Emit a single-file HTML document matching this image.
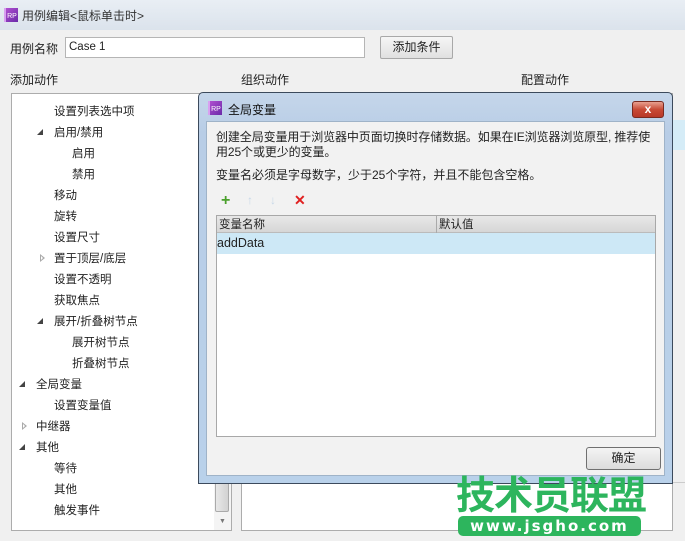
<!DOCTYPE html>
<html><head><meta charset="utf-8"><style>
*{margin:0;padding:0;box-sizing:border-box}
body{width:685px;height:541px;overflow:hidden;background:#f0f0f0;font-family:"Liberation Sans","Noto Sans CJK SC",sans-serif;font-size:12px;color:#222;position:relative}
.a{position:absolute}
.rp{position:absolute;width:14px;height:14px;background:linear-gradient(135deg,#b04fd0,#6a2aa8);color:#fff;font-size:7px;line-height:18px;text-align:center;border-left:2px solid #d8a0f0}
.tree div{position:absolute;font-size:11.5px;white-space:nowrap}
.tree div.tri{width:0;height:0;border-left:6px solid transparent;border-bottom:6px solid #444}
.tree div.trio{width:0;height:0;border-top:4px solid transparent;border-bottom:4px solid transparent;border-left:5px solid #aaa}
.tree div.trio:after{content:"";position:absolute;left:-4px;top:-2px;border-top:2px solid transparent;border-bottom:2px solid transparent;border-left:2px solid #fff}
</style></head><body>
<div class="a" style="left:0;top:0;width:685px;height:30px;background:linear-gradient(#e9eef4,#dbe3ec)"></div>
<div class="rp" style="left:4px;top:8px"><span>RP</span></div>
<div class="a" style="left:22px;top:7px;color:#333;font-size:12px">用例编辑&lt;鼠标单击时&gt;</div>
<div class="a" style="left:10px;top:40px">用例名称</div>
<div class="a" style="left:65px;top:37px;width:300px;height:21px;background:#fff;border:1px solid #b5b5b5;padding:3px 3px;font-size:11.5px">Case 1</div>
<div class="a" style="left:380px;top:36px;width:73px;height:23px;background:linear-gradient(#f6f6f6,#e0e0e0);border:1px solid #a8a8a8;border-radius:2px;text-align:center;line-height:21px">添加条件</div>
<div class="a" style="left:10px;top:71px">添加动作</div>
<div class="a" style="left:241px;top:71px">组织动作</div>
<div class="a" style="left:521px;top:71px">配置动作</div>
<div class="a" style="left:11px;top:93px;width:221px;height:438px;background:#fff;border:1px solid #acacac"></div>
<div class="a" style="left:214px;top:94px;width:17px;height:436px;background:#f4f4f4"></div>
<div class="a" style="left:215px;top:480px;width:14px;height:32px;background:linear-gradient(90deg,#e8e8e8,#d2d2d2);border:1px solid #aaa;border-radius:2px"></div>
<div class="a" style="left:219px;top:518px;font-size:7px;color:#777">▼</div>
<div class="a" style="left:241px;top:93px;width:432px;height:438px;background:#fff;border:1px solid #acacac"></div>
<div class="a" style="left:673px;top:120px;width:12px;height:30px;background:#d5ecf7"></div>
<div class="a" style="left:673px;top:482px;width:12px;height:1px;background:#ccc"></div>
<div class="tree">
<div style="left:54px;top:103px">设置列表选中项</div>
<div class="tri" style="left:37px;top:129px"></div><div style="left:54px;top:124px">启用/禁用</div>
<div style="left:72px;top:145px">启用</div>
<div style="left:72px;top:166px">禁用</div>
<div style="left:54px;top:187px">移动</div>
<div style="left:54px;top:208px">旋转</div>
<div style="left:54px;top:229px">设置尺寸</div>
<div class="trio" style="left:40px;top:254px"></div><div style="left:54px;top:250px">置于顶层/底层</div>
<div style="left:54px;top:271px">设置不透明</div>
<div style="left:54px;top:292px">获取焦点</div>
<div class="tri" style="left:37px;top:318px"></div><div style="left:54px;top:313px">展开/折叠树节点</div>
<div style="left:72px;top:334px">展开树节点</div>
<div style="left:72px;top:355px">折叠树节点</div>
<div class="tri" style="left:19px;top:381px"></div><div style="left:36px;top:376px">全局变量</div>
<div style="left:54px;top:397px">设置变量值</div>
<div class="trio" style="left:22px;top:422px"></div><div style="left:36px;top:418px">中继器</div>
<div class="tri" style="left:19px;top:444px"></div><div style="left:36px;top:439px">其他</div>
<div style="left:54px;top:460px">等待</div>
<div style="left:54px;top:481px">其他</div>
<div style="left:54px;top:502px">触发事件</div>
</div>
<!-- dialog -->
<div class="a" style="left:198px;top:92px;width:475px;height:392px;background:linear-gradient(#c5d6ea,#b8cde6 40px,#b9d1ea);border:1px solid #3c4a5c;border-radius:5px 5px 0 0"></div>
<div class="rp" style="left:208px;top:101px"><span>RP</span></div>
<div class="a" style="left:228px;top:101px;font-size:12px;color:#111">全局变量</div>
<div class="a" style="left:632px;top:101px;width:32px;height:17px;background:linear-gradient(#e8a090,#c84a36 50%,#b83828);border:1px solid #7a2a20;border-radius:3px;color:#fff;font-weight:bold;text-align:center;line-height:14px;font-size:12px">x</div>
<div class="a" style="left:206px;top:121px;width:459px;height:355px;background:#f2f2f2;border:1px solid #9fb3c8"></div>
<div class="a" style="left:216px;top:130px;width:438px;font-size:12px;line-height:15px;letter-spacing:-0.1px">创建全局变量用于浏览器中页面切换时存储数据。如果在IE浏览器浏览原型, 推荐使用25个或更少的变量。</div>
<div class="a" style="left:216px;top:166px;font-size:12px">变量名必须是字母数字，少于25个字符，并且不能包含空格。</div>
<div class="a" style="left:221px;top:192px;color:#4aa02c;font-weight:bold;font-size:16px">+</div>
<div class="a" style="left:247px;top:193px;color:#c8d8e8;font-size:12px">↑</div>
<div class="a" style="left:270px;top:193px;color:#c8d8e8;font-size:12px">↓</div>
<div class="a" style="left:294px;top:192px;color:#e02020;font-weight:bold;font-size:14px">✕</div>
<div class="a" style="left:216px;top:215px;width:440px;height:222px;background:#fff;border:1px solid #a8a8a8"></div>
<div class="a" style="left:217px;top:216px;width:438px;height:17px;background:linear-gradient(#e8e8e8,#d6d6d6);border-bottom:1px solid #bbb"></div>
<div class="a" style="left:436px;top:216px;width:1px;height:17px;background:#aaa"></div>
<div class="a" style="left:219px;top:216px;font-size:11.5px">变量名称</div>
<div class="a" style="left:439px;top:216px;font-size:11.5px">默认值</div>
<div class="a" style="left:217px;top:233px;width:438px;height:21px;background:#cde8f6"></div>
<div class="a" style="left:217px;top:236px;font-size:12.5px">addData</div>
<div class="a" style="left:586px;top:447px;width:75px;height:23px;background:linear-gradient(#f4f4f4,#dcdcdc);border:1px solid #707070;border-radius:3px;text-align:center;line-height:21px">确定</div>
<!-- watermark -->
<div class="a" style="left:456px;top:470px;width:190px;font-size:39px;font-weight:bold;color:#2db55d;letter-spacing:-1px;line-height:46px;font-family:'Noto Sans CJK SC',sans-serif">技术员联盟</div>
<div class="a" style="left:458px;top:516px;width:183px;height:20px;background:#2db55d;border-radius:5px;color:#fff;text-align:center;font-weight:bold;font-size:15px;line-height:20px;letter-spacing:2px;font-family:'DejaVu Sans',sans-serif">www.jsgho.com</div>
</body></html>
